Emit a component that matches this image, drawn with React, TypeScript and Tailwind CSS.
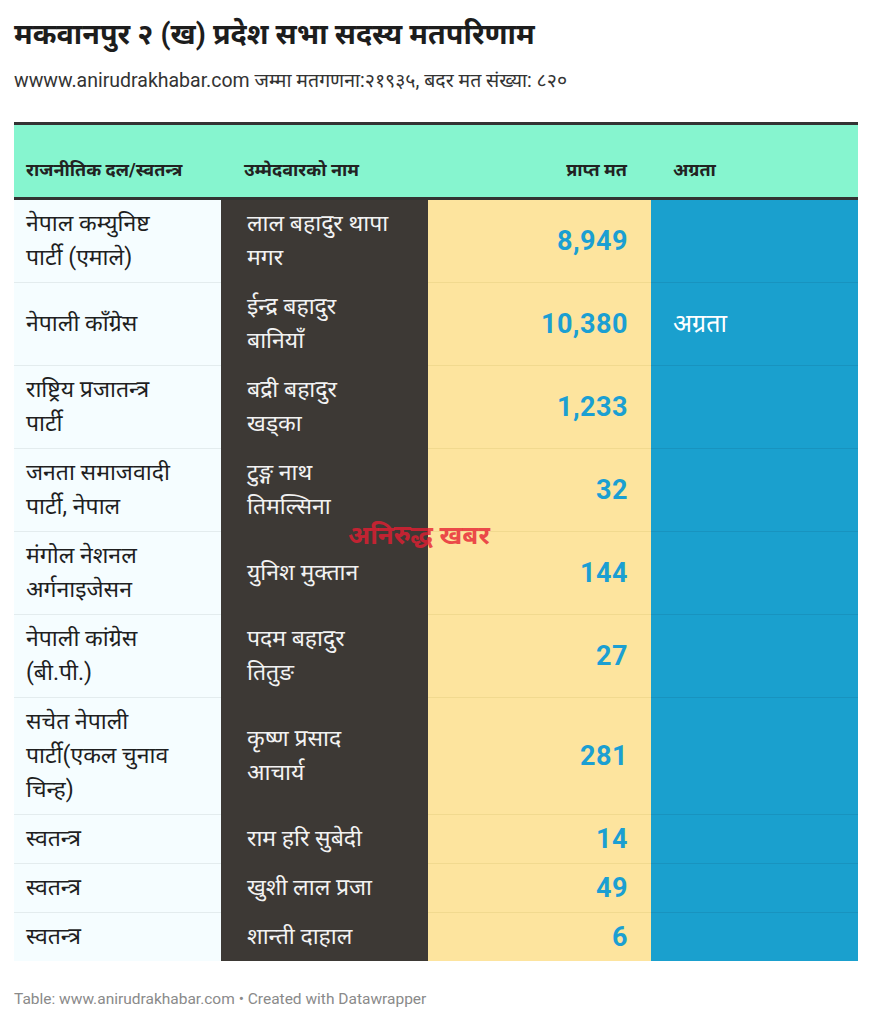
import React from "react";

type Row = { party: string[]; cand: string[]; votes: string; lead?: string };

const rows: Row[] = [
  { party: ["नेपाल कम्युनिष्ट", "पार्टी (एमाले)"], cand: ["लाल बहादुर थापा", "मगर"], votes: "8,949" },
  { party: ["नेपाली काँग्रेस"], cand: ["ईन्द्र बहादुर", "बानियाँ"], votes: "10,380", lead: "अग्रता" },
  { party: ["राष्ट्रिय प्रजातन्त्र", "पार्टी"], cand: ["बद्री बहादुर", "खड्का"], votes: "1,233" },
  { party: ["जनता समाजवादी", "पार्टी, नेपाल"], cand: ["टुङ्ग नाथ", "तिमल्सिना"], votes: "32" },
  { party: ["मंगोल नेशनल", "अर्गनाइजेसन"], cand: ["युनिश मुक्तान"], votes: "144" },
  { party: ["नेपाली कांग्रेस", "(बी.पी.)"], cand: ["पदम बहादुर", "तितुङ"], votes: "27" },
  { party: ["सचेत नेपाली", "पार्टी(एकल चुनाव", "चिन्ह)"], cand: ["कृष्ण प्रसाद", "आचार्य"], votes: "281" },
  { party: ["स्वतन्त्र"], cand: ["राम हरि सुबेदी"], votes: "14" },
  { party: ["स्वतन्त्र"], cand: ["खुशी लाल प्रजा"], votes: "49" },
  { party: ["स्वतन्त्र"], cand: ["शान्ती दाहाल"], votes: "6" },
];

export default function App() {
  return (
    <div
      className="w-[873px] min-h-[1024px] bg-white text-[#222]"
      style={{ fontFamily: 'Roboto, "Noto Sans", "DejaVu Sans", sans-serif' }}
    >
      <div className="px-[14px] pt-[14px]">
        <h1 className="text-[28.7px] leading-[40px] font-bold text-[#1d1d1d] whitespace-nowrap">
          मकवानपुर २ (ख) प्रदेश सभा सदस्य मतपरिणाम
        </h1>
        <p className="mt-[15px] text-[19.5px] leading-[24px] text-[#333] whitespace-nowrap">
          wwww.anirudrakhabar.com जम्मा मतगणना:२१९३५, बदर मत संख्या: ८२०
        </p>

        <div className="relative mt-[29px] w-[844px]">
          <div className="border-t-[3px] border-[#333]">
            <div className="grid grid-cols-[207px_207px_223px_207px] bg-[#86f5cf] h-[75px] border-b-[3px] border-[#333] items-end pb-[16px] text-[18px] leading-[22px] font-bold text-[#222]">
              <div className="pl-[12px]">राजनीतिक दल/स्वतन्त्र</div>
              <div className="pl-[23px]">उम्मेदवारको नाम</div>
              <div className="pr-[24px] text-right">प्राप्त मत</div>
              <div className="pl-[22px]">अग्रता</div>
            </div>
          </div>
          <div className="grid grid-cols-[207px_207px_223px_207px] text-[23px] leading-[34px]">
            {rows.map((r, i) => {
              const last = i === rows.length - 1;
              return (
                <React.Fragment key={i}>
                  <div
                    className={`bg-[#f5fdff] pl-[12px] py-[7px] flex flex-col justify-center text-[#1f1f1f] ${last ? "" : "border-b border-[#e3ecee]"}`}
                  >
                    {r.party.map((t, j) => (
                      <span key={j} className="whitespace-nowrap">{t}</span>
                    ))}
                  </div>
                  <div
                    className={`bg-[#3d3935] pl-[26px] py-[7px] flex flex-col justify-center text-[#f2f2f2] ${last ? "" : "border-b border-[#3d3935]"}`}
                  >
                    {r.cand.map((t, j) => (
                      <span key={j} className="whitespace-nowrap">{t}</span>
                    ))}
                  </div>
                  <div
                    className={`bg-[#fde49e] pr-[23px] py-[7px] flex items-center justify-end text-[#1b9fd2] font-bold text-[27px] tracking-[0.5px] ${last ? "" : "border-b border-[#f1d98f]"}`}
                  >
                    {r.votes}
                  </div>
                  <div
                    className={`bg-[#1aa0ce] pl-[22px] py-[7px] flex items-center text-white text-[25px] ${last ? "" : "border-b border-[#1893bf]"}`}
                  >
                    {r.lead ?? ""}
                  </div>
                </React.Fragment>
              );
            })}
          </div>
          <div className="absolute left-[334px] top-[397px] text-[26px] leading-[32px] font-bold text-[rgba(230,30,50,0.8)] pointer-events-none whitespace-nowrap">
            अनिरुद्ध खबर
          </div>
        </div>

        <p className="mt-[29px] text-[15.5px] leading-[18px] text-[#8a8a8a] whitespace-nowrap">
          Table: www.anirudrakhabar.com • Created with Datawrapper
        </p>
      </div>
    </div>
  );
}
